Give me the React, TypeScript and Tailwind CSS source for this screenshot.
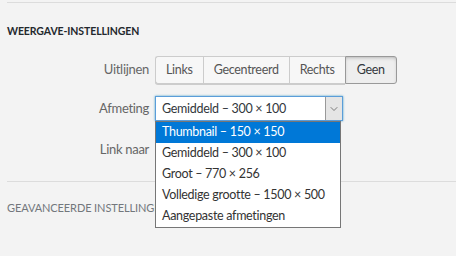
import { ChevronDown } from 'lucide-react'

const aligns = ['Links', 'Gecentreerd', 'Rechts', 'Geen']
const sizes = [
  'Thumbnail – 150 × 150',
  'Gemiddeld – 300 × 100',
  'Groot – 770 × 256',
  'Volledige grootte – 1500 × 500',
  'Aangepaste afmetingen',
]

export default function App() {
  return (
    <div
      className="h-[256px] w-[456px] overflow-hidden bg-[#f3f3f3] pl-[7px] text-[12.5px] tracking-[-0.3px] text-[#444]"
      style={{ fontFamily: 'Lato, "Noto Sans", sans-serif' }}
    >
      <div className="mt-[2px] border-t border-[#dcdcdc]" />
      <h2 className="mt-[21px] text-[10.5px] leading-[14px] font-bold tracking-[-0.1px] text-[#23282d]">WEERGAVE-INSTELLINGEN</h2>

      <div className="mt-[18px] grid grid-cols-[142px_1fr] items-center gap-x-[6px]">
        <label className="text-right text-[13px] text-[#666]">Uitlijnen</label>
        <div className="flex h-[28px]">
          {aligns.map((label, i) => (
            <button
              key={label}
              className={
                label === 'Geen'
                  ? 'rounded-r-[3px] border border-[#999] bg-[#eee] px-[11px] text-[#32373c] shadow-[inset_0_2px_5px_-3px_rgba(0,0,0,0.5)]'
                  : `border border-r-0 border-[#ccc] bg-[#f7f7f7] px-[10px] text-[#555] shadow-[0_1px_0_#ccc] ${i === 0 ? 'rounded-l-[3px]' : ''}`
              }
            >
              {label}
            </button>
          ))}
        </div>

        <label className="mt-[12px] text-right text-[13px] text-[#666]">Afmeting</label>
        <div className="relative mt-[12px]">
          <div className="flex h-[25px] w-[188px] items-stretch border border-[#5b9dd9] bg-white shadow-[0_0_2px_rgba(30,140,190,0.8)]">
            <span className="flex-1 pl-[6px] leading-[23px] whitespace-nowrap text-[#32373c]">Gemiddeld – 300 × 100</span>
            <span className="flex w-[17px] items-center justify-center border-l border-[#999] bg-[#e5e5e5]">
              <ChevronDown size={12} strokeWidth={1.5} className="text-[#555]" />
            </span>
          </div>
          <ul className="absolute top-[25px] left-0 z-10 w-[186px] border border-[#767676] bg-white">
            {sizes.map((s, i) => (
              <li
                key={s}
                className={`h-[21px] pl-[6px] leading-[20px] whitespace-nowrap ${i === 0 ? 'bg-[#0078d7] text-white' : 'text-[#333]'}`}
              >
                {s}
              </li>
            ))}
          </ul>
        </div>

        <label className="mt-[16px] text-right text-[13px] text-[#666]">Link naar</label>
        <div className="mt-[16px] h-[25px]" />
      </div>

      <div className="mt-[19px] border-t border-[#dcdcdc]" />
      <h2 className="mt-[19px] text-[11px] leading-[14px] tracking-[-0.1px] text-[#72777c]">GEAVANCEERDE INSTELLINGEN</h2>
    </div>
  )
}
